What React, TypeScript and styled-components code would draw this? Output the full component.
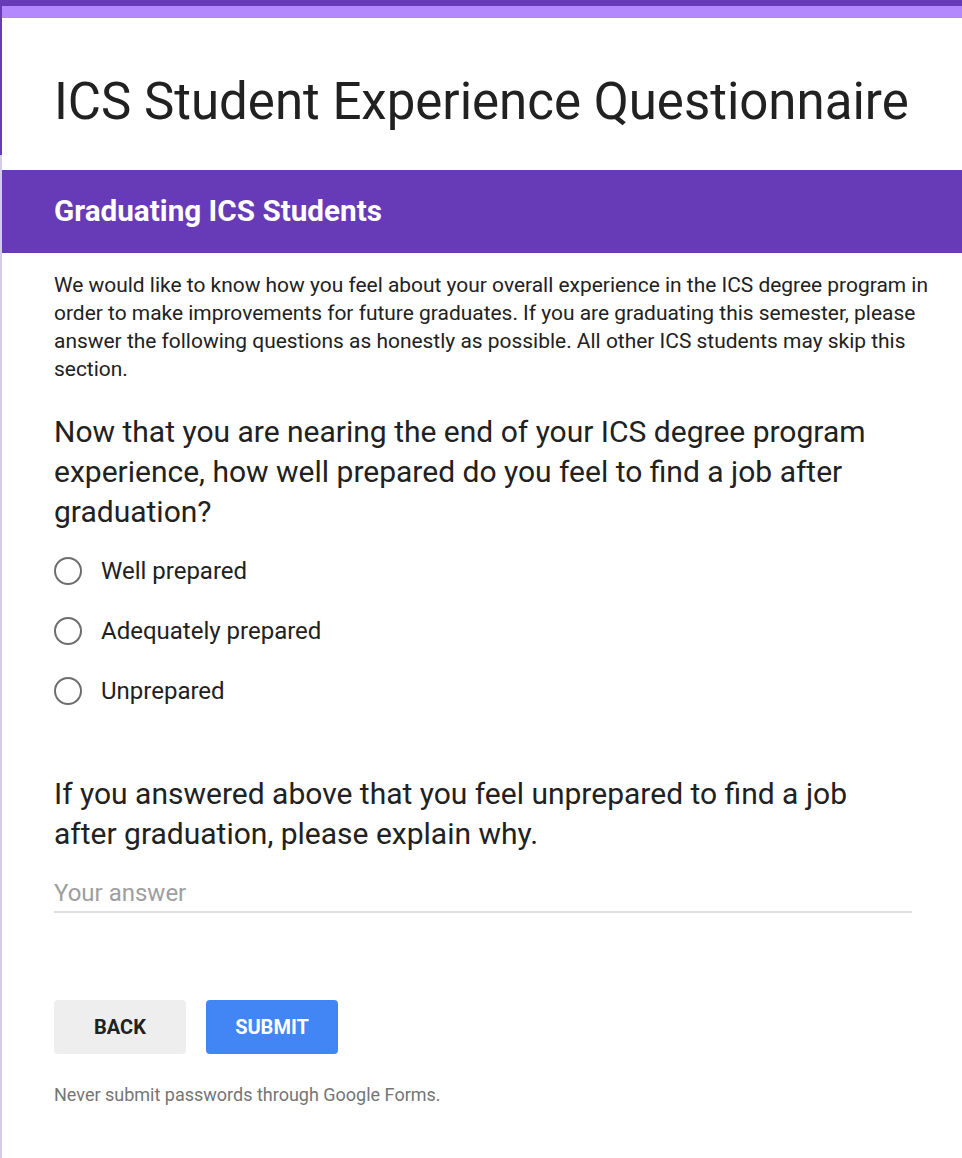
import * as React from 'react';
import styled, { createGlobalStyle } from 'styled-components';

const COLORS = {
  PURPLE: '#673ab7',
  LAVENDER: '#b388ff',
  PAGE: '#d5cce6',
  TEXT: '#212121',
  MUTED: '#757575',
  BLUE: '#4285f4',
};

const options = ['Well prepared', 'Adequately prepared', 'Unprepared'];

export default function App() {
  return (
    <Page>
      <GlobalStyle />
      <Card>
        <TitleBlock>
          <Title>ICS Student Experience Questionnaire</Title>
        </TitleBlock>
        <SectionBand>Graduating ICS Students</SectionBand>
        <Body>
          <Description>
            We would like to know how you feel about your overall experience in the ICS degree program in
            order to make improvements for future graduates. If you are graduating this semester, please
            answer the following questions as honestly as possible. All other ICS students may skip this
            section.
          </Description>
          <Question>
            Now that you are nearing the end of your ICS degree program experience, how well prepared do you
            feel to find a job after graduation?
          </Question>
          <OptionList>
            {options.map((o) => (
              <Option key={o}>
                <Radio />
                <span>{o}</span>
              </Option>
            ))}
          </OptionList>
          <Question $gap={53}>
            If you answered above that you feel unprepared to find a job after graduation, please explain why.
          </Question>
          <AnswerInput placeholder="Your answer" />
          <Buttons>
            <Button>BACK</Button>
            <Button $primary>SUBMIT</Button>
          </Buttons>
          <Footnote>Never submit passwords through Google Forms.</Footnote>
        </Body>
      </Card>
    </Page>
  );
}

const GlobalStyle = createGlobalStyle`
  html, body {
    margin: 0;
    padding: 0;
  }
  body {
    font-family: Roboto, 'Liberation Sans', Arial, sans-serif;
    color: ${COLORS.TEXT};
  }
`;

const Page = styled.div`
  min-height: 1158px;
  padding-top: 6px;
  box-sizing: border-box;
  background: linear-gradient(${COLORS.PURPLE} 0 155px, ${COLORS.PAGE} 155px);
`;

const Card = styled.div`
  margin-left: 2px;
  min-height: 1152px;
  box-sizing: border-box;
  background: #fff;
  border-top: 12px solid ${COLORS.LAVENDER};
`;

const TitleBlock = styled.div`
  height: 152px;
  box-sizing: border-box;
  padding: 56px 30px 0 52px;
`;

const Title = styled.h1`
  margin: 0;
  font-size: 51px;
  line-height: 56px;
  font-weight: 400;
  color: ${COLORS.TEXT};
`;

const SectionBand = styled.div`
  height: 83px;
  box-sizing: border-box;
  padding: 23px 52px 0;
  background: ${COLORS.PURPLE};
  color: #fff;
  font-size: 29.7px;
  line-height: 36px;
  font-weight: 700;
`;

const Body = styled.div`
  padding: 18px 26px 40px 52px;
`;

const Description = styled.p`
  margin: 0;
  font-size: 20.95px;
  line-height: 28px;
  color: ${COLORS.TEXT};
`;

const Question = styled.div<{ $gap?: number }>`
  margin-top: ${(p) => p.$gap ?? 29}px;
  max-width: 860px;
  font-size: 30px;
  line-height: 40px;
  color: ${COLORS.TEXT};
`;

const OptionList = styled.div`
  margin-top: 9px;
  display: flex;
  flex-direction: column;
`;

const Option = styled.label`
  height: 60px;
  display: flex;
  align-items: center;
  gap: 19px;
  font-size: 24px;
  color: ${COLORS.TEXT};
`;

const Radio = styled.span`
  width: 28px;
  height: 28px;
  box-sizing: border-box;
  border: 2px solid #6e6e6e;
  border-radius: 50%;
  flex-shrink: 0;
`;

const AnswerInput = styled.input`
  display: block;
  width: 858px;
  box-sizing: border-box;
  margin-top: 24px;
  padding: 0 0 3px;
  border: none;
  border-bottom: 2px solid #e0e0e0;
  outline: none;
  font-family: inherit;
  font-size: 24px;
  line-height: 30px;
  height: 35px;
  color: ${COLORS.TEXT};
  &::placeholder {
    color: #9e9e9e;
  }
`;

const Buttons = styled.div`
  margin-top: 87px;
  display: flex;
  gap: 20px;
`;

const Button = styled.button<{ $primary?: boolean }>`
  width: 132px;
  height: 54px;
  border: none;
  border-radius: 4px;
  font-family: inherit;
  font-size: 20px;
  font-weight: 700;
  color: ${(p) => (p.$primary ? '#fff' : COLORS.TEXT)};
  background: ${(p) => (p.$primary ? COLORS.BLUE : '#eeeeee')};
  cursor: pointer;
`;

const Footnote = styled.div`
  margin-top: 31px;
  font-size: 18px;
  line-height: 20px;
  color: ${COLORS.MUTED};
`;
